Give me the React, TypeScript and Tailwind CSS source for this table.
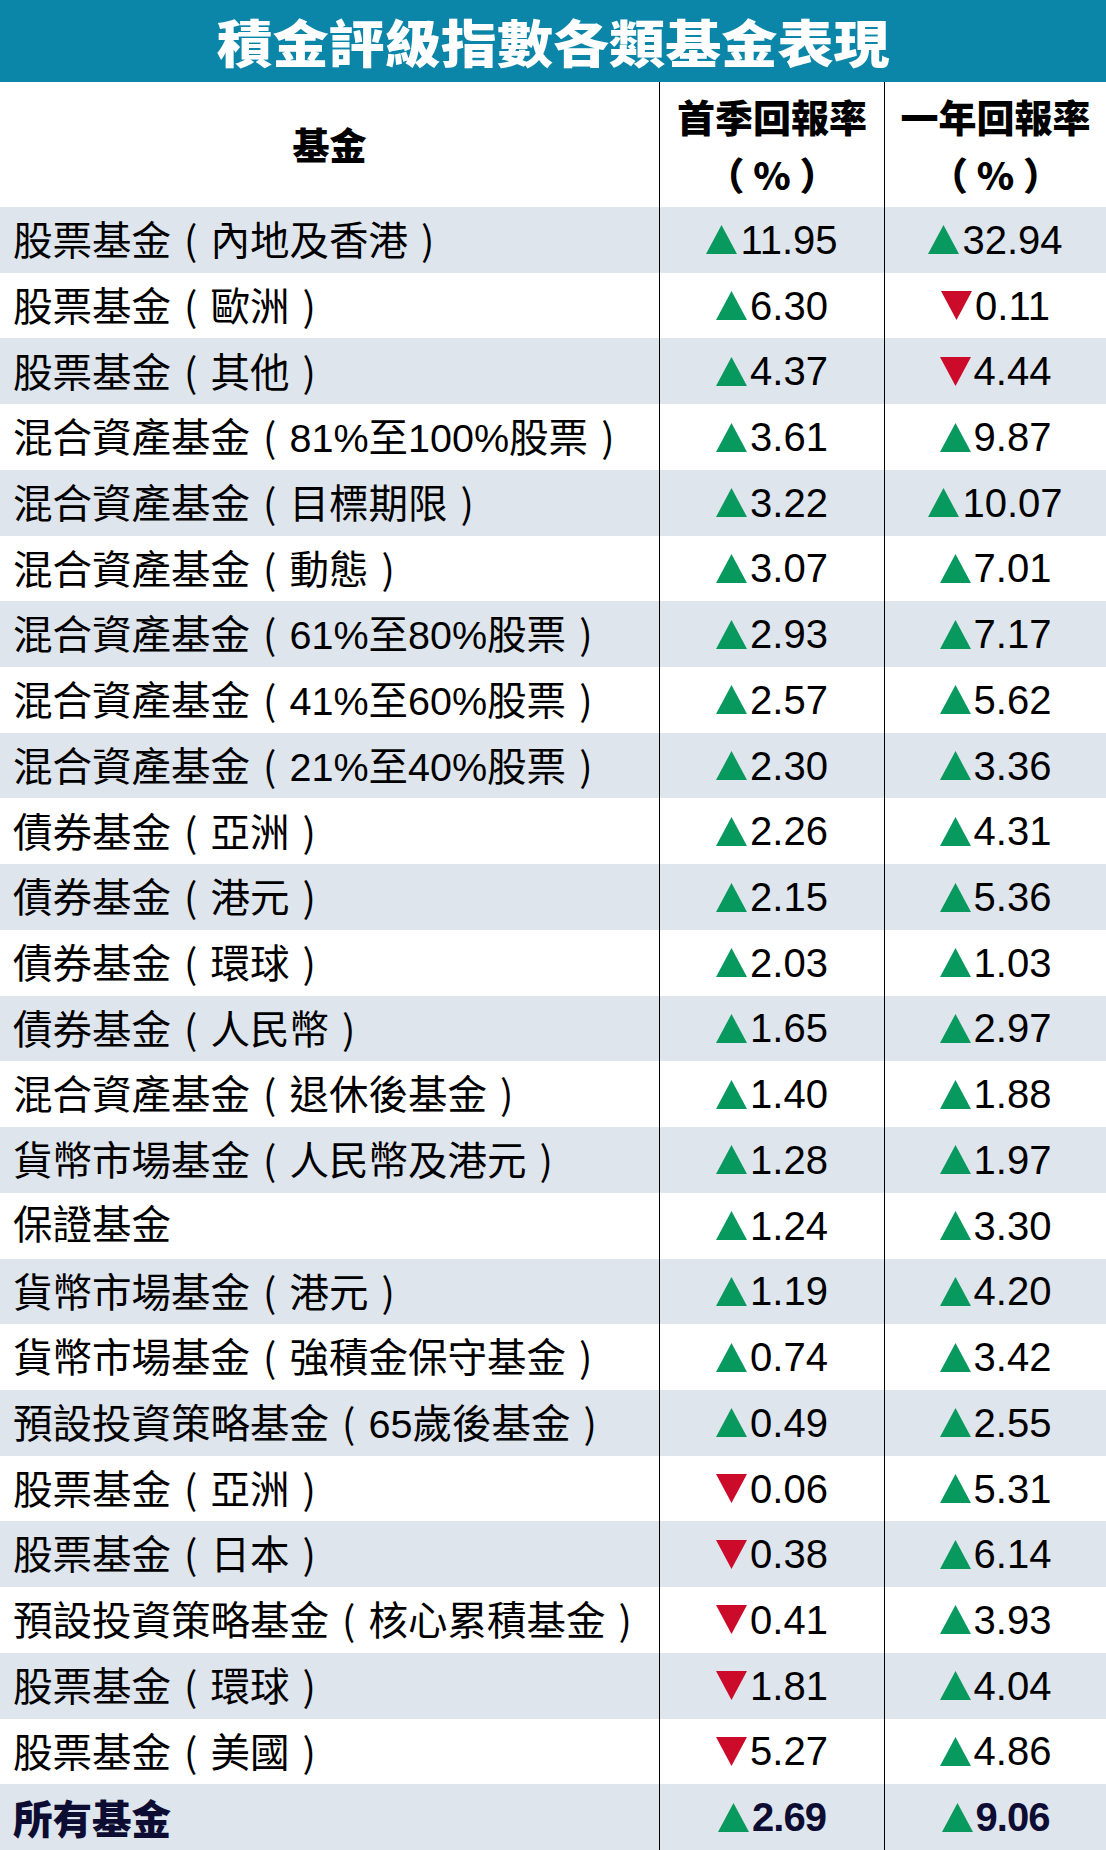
import React from "react";

type Row = {
  name: string;
  q: number;
  y: number;
};

// positive = up (green), negative = down (red)
const rows: Row[] = [
  { name: "股票基金（內地及香港）", q: 11.95, y: 32.94 },
  { name: "股票基金（歐洲）", q: 6.3, y: -0.11 },
  { name: "股票基金（其他）", q: 4.37, y: -4.44 },
  { name: "混合資產基金（81%至100%股票）", q: 3.61, y: 9.87 },
  { name: "混合資產基金（目標期限）", q: 3.22, y: 10.07 },
  { name: "混合資產基金（動態）", q: 3.07, y: 7.01 },
  { name: "混合資產基金（61%至80%股票）", q: 2.93, y: 7.17 },
  { name: "混合資產基金（41%至60%股票）", q: 2.57, y: 5.62 },
  { name: "混合資產基金（21%至40%股票）", q: 2.3, y: 3.36 },
  { name: "債券基金（亞洲）", q: 2.26, y: 4.31 },
  { name: "債券基金（港元）", q: 2.15, y: 5.36 },
  { name: "債券基金（環球）", q: 2.03, y: 1.03 },
  { name: "債券基金（人民幣）", q: 1.65, y: 2.97 },
  { name: "混合資產基金（退休後基金）", q: 1.4, y: 1.88 },
  { name: "貨幣市場基金（人民幣及港元）", q: 1.28, y: 1.97 },
  { name: "保證基金", q: 1.24, y: 3.3 },
  { name: "貨幣市場基金（港元）", q: 1.19, y: 4.2 },
  { name: "貨幣市場基金（強積金保守基金）", q: 0.74, y: 3.42 },
  { name: "預設投資策略基金（65歲後基金）", q: 0.49, y: 2.55 },
  { name: "股票基金（亞洲）", q: -0.06, y: 5.31 },
  { name: "股票基金（日本）", q: -0.38, y: 6.14 },
  { name: "預設投資策略基金（核心累積基金）", q: -0.41, y: 3.93 },
  { name: "股票基金（環球）", q: -1.81, y: 4.04 },
  { name: "股票基金（美國）", q: -5.27, y: 4.86 },
];

// full-width brackets sit centred in their cell in the print version
const FundName = ({ name }: { name: string }) => {
  const parts = name.split(/([（）])/);
  return (
    <>
      {parts.map((p, i) =>
        p === "（" || p === "）" ? (
          <span key={i} className="inline-block w-[1em] text-center font-['Noto_Sans_CJK_TC',sans-serif]">
            {p === "（" ? "(" : ")"}
          </span>
        ) : (
          <span key={i}>{p}</span>
        )
      )}
    </>
  );
};

const Triangle = ({ up }: { up: boolean }) =>
  up ? (
    <svg width="31" height="29" viewBox="0 0 31 29" className="shrink-0">
      <polygon points="15.5,0 31,29 0,29" fill="#08995f" />
    </svg>
  ) : (
    <svg width="31" height="29" viewBox="0 0 31 29" className="shrink-0">
      <polygon points="0,0 31,0 15.5,29" fill="#cc0a2a" />
    </svg>
  );

const Value = ({ v, bold }: { v: number; bold?: boolean }) => (
  <div className="flex items-center justify-center gap-[3px] border-l border-black h-full">
    <Triangle up={v >= 0} />
    <span
      className={
        bold
          ? "text-[40px] font-bold leading-none text-[#0d0d33] tracking-[-1px]"
          : "text-[40px] leading-none text-black"
      }
    >
      {Math.abs(v).toFixed(2)}
    </span>
  </div>
);

export default function App() {
  return (
    <div className="w-[1106px] h-[1850px] flex flex-col bg-white font-['Liberation_Sans','Noto_Sans_CJK_TC',sans-serif]">
      {/* title */}
      <div className="h-[82px] bg-[#0b86a8] flex items-center justify-center">
        <h1 className="text-[51px] font-black text-white leading-none scale-x-110 font-['Noto_Sans_CJK_TC',sans-serif]">
          積金評級指數各類基金表現
        </h1>
      </div>

      {/* column heads */}
      <div className="h-[125px] grid grid-cols-[659px_225px_1fr] font-['Noto_Sans_CJK_TC',sans-serif] font-black text-black">
        <div className="flex items-center justify-center text-[37px] leading-none">基金</div>
        <div className="border-l border-black flex flex-col items-center justify-center gap-[20px] text-[38px] leading-none">
          <span>首季回報率</span>
          <span>（ % ）</span>
        </div>
        <div className="border-l border-black flex flex-col items-center justify-center gap-[20px] text-[38px] leading-none">
          <span>一年回報率</span>
          <span>（ % ）</span>
        </div>
      </div>

      {/* rows */}
      <div className="flex-1 flex flex-col">
        {rows.map((r, i) => (
          <div
            key={r.name}
            className={`flex-1 grid grid-cols-[659px_225px_1fr] ${i % 2 === 0 ? "bg-[#dfe5ec]" : "bg-white"}`}
          >
            <div className="flex items-center pl-[13px] text-[39.5px] leading-none text-black whitespace-nowrap">
              <span>
                <FundName name={r.name} />
              </span>
            </div>
            <Value v={r.q} />
            <Value v={r.y} />
          </div>
        ))}
        <div className="flex-1 grid grid-cols-[659px_225px_1fr] bg-[#dfe5ec]">
          <div className="flex items-center pl-[13px] text-[39.5px] font-black leading-none text-[#0d0d33] font-['Noto_Sans_CJK_TC',sans-serif]">
            所有基金
          </div>
          <Value v={2.69} bold />
          <Value v={9.06} bold />
        </div>
      </div>
    </div>
  );
}
